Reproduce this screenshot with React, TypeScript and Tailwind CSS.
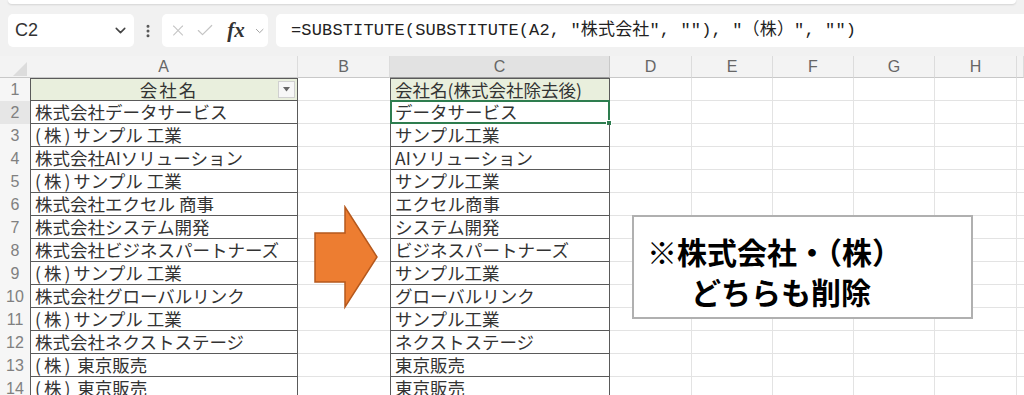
import { Check, ChevronDown, EllipsisVertical, X } from "lucide-react";

const colA = [
  "会社名",
  "株式会社データサービス",
  "(株)サンプル 工業",
  "株式会社AIソリューション",
  "(株)サンプル 工業",
  "株式会社エクセル 商事",
  "株式会社システム開発",
  "株式会社ビジネスパートナーズ",
  "(株)サンプル 工業",
  "株式会社グローバルリンク",
  "(株)サンプル 工業",
  "株式会社ネクストステージ",
  "(株) 東京販売",
  "(株) 東京販売",
];

const colC = [
  "会社名(株式会社除去後)",
  "データサービス",
  "サンプル工業",
  "AIソリューション",
  "サンプル工業",
  "エクセル商事",
  "システム開発",
  "ビジネスパートナーズ",
  "サンプル工業",
  "グローバルリンク",
  "サンプル工業",
  "ネクストステージ",
  "東京販売",
  "東京販売",
];

const letters = ["A", "B", "C", "D", "E", "F", "G", "H", ""];

// widen the "(株)" prefix a little, the sheet font draws it looser
function CellText({ text }: { text: string }) {
  if (text.startsWith("(株)")) {
    return (
      <>
        <span className="tracking-[3px]">(株)</span>
        {text.slice(3)}
      </>
    );
  }
  return <>{text}</>;
}

function FormulaBar() {
  return (
    <div className="flex items-center h-[33px] pl-2 gap-0">
      {/* name box */}
      <div className="w-[126px] h-full bg-white rounded-[5px] flex items-center justify-between pl-[7px] pr-[5px]">
        <span className="text-[18px] text-[#333] font-['Liberation_Sans',sans-serif]">C2</span>
        <ChevronDown className="w-[17px] h-[17px] text-[#444]" strokeWidth={2.2} />
      </div>
      <div className="w-[28px] flex justify-center">
        <EllipsisVertical className="w-[16px] h-[16px] text-[#555]" strokeWidth={2.5} />
      </div>
      {/* function buttons */}
      <div className="w-[106px] h-full bg-white rounded-[5px] flex items-center pl-[7px] pr-[2px] gap-[8px]">
        <X className="w-[19px] h-[19px] text-[#c4c4c4]" strokeWidth={1.4} />
        <Check className="w-[21px] h-[21px] text-[#c4c4c4]" strokeWidth={1.4} />
        <span className="ml-[4px] text-[21px] italic font-bold text-[#333] font-['Liberation_Serif',serif] leading-none">
          fx
        </span>
        <ChevronDown className="w-[14px] h-[14px] text-[#999]" strokeWidth={1.6} />
      </div>
      {/* formula */}
      <div className="ml-2 flex-1 h-full bg-white rounded-l-[5px] flex items-center pl-[15px]">
        <span className="text-[17px] text-[#222] whitespace-pre tracking-[0.15px] font-['Liberation_Mono','Noto_Sans_CJK_JP',monospace]">
          =SUBSTITUTE(SUBSTITUTE(A2, "株式会社", ""), "（株）", "")
        </span>
      </div>
    </div>
  );
}

function Sheet() {
  const cellText = "text-[17.5px] text-[#333] leading-[20px] whitespace-nowrap font-['Noto_Sans_CJK_JP',sans-serif]";
  return (
    <div className="grid grid-cols-[30px_268px_92px_220px_82px_81px_81px_81px_82px_1fr] grid-rows-[22px_repeat(14,23px)] bg-white">
      {/* header row */}
      <div className="relative bg-[#f3f3f3] border-b border-[#c8c8c8]">
        <svg className="absolute left-[13px] top-[6px]" width="14" height="14" viewBox="0 0 14 14">
          <polygon points="14,0 14,14 0,14" fill="#dcdcdc" />
        </svg>
      </div>
      {letters.map((l, i) => (
        <div
          key={l + i}
          className={`flex items-center justify-center border-r border-b text-[16px] text-[#666] font-['Liberation_Sans',sans-serif] ${
            l === "C" ? "bg-[#e2e2e2] border-r-[#c8c8c8] border-b-[#9a9a9a]" : "bg-[#f3f3f3] border-r-[#dcdcdc] border-b-[#c8c8c8]"
          }`}
        >
          {l}
        </div>
      ))}

      {colA.map((a, idx) => {
        const r = idx + 1;
        const head = r === 1;
        return (
          <div key={r} className="contents">
            <div
              className={`flex items-center justify-center text-[16px] text-[#808080] font-['Liberation_Sans',sans-serif] ${
                r === 2 ? "bg-[#e6e6e6]" : "bg-[#f6f6f6]"
              }`}
            >
              {r}
            </div>
            {/* A */}
            <div
              className={`relative flex items-center border-l border-r border-b border-[#5a5a5a] ${
                head ? "bg-[#e9efdd] border-t justify-center" : "pl-[4px]"
              }`}
            >
              <span className={`${cellText} ${head ? "tracking-[2px] pl-[10px]" : ""}`}>
                <CellText text={a} />
              </span>
              {head && (
                <div className="absolute right-[2px] top-[2px] w-[17px] h-[17px] bg-[#f7f7f7] border border-[#d0d0d0] flex items-center justify-center">
                  <svg width="7" height="5" viewBox="0 0 7 5">
                    <polygon points="0,0 7,0 3.5,4.5" fill="#666" />
                  </svg>
                </div>
              )}
            </div>
            {/* B */}
            <div className="border-b border-[#e3e3e3]" />
            {/* C */}
            <div
              className={`relative flex items-center pl-[4px] border-l border-r border-b border-[#5a5a5a] ${
                head ? "bg-[#e9efdd] border-t" : ""
              }`}
            >
              <span className={cellText}>{colC[idx]}</span>
              {r === 2 && (
                <div className="absolute -left-[1px] -top-[1px] -right-[1px] -bottom-[1px] border-2 border-[#2e7d4f]">
                  <div className="absolute -right-[4px] -bottom-[4px] w-[6px] h-[6px] bg-[#2e7d4f] border border-white" />
                </div>
              )}
            </div>
            {/* D..H */}
            {[0, 1, 2, 3, 4].map((k) => (
              <div key={k} className="border-r border-b border-[#e3e3e3]" />
            ))}
            <div className="border-b border-[#e3e3e3]" />
          </div>
        );
      })}
    </div>
  );
}

export default function App() {
  return (
    <div className="relative w-[1024px] h-[395px] overflow-hidden bg-[#f1f1f1]">
      <div className="h-[4px] mx-[8px] bg-white rounded-b-[6px] shadow-[0_1px_2px_rgba(0,0,0,0.12)]" />
      <div className="mt-[10px]">
        <FormulaBar />
      </div>
      <div className="mt-[9px]">
        <Sheet />
      </div>

      {/* orange arrow shape */}
      <svg className="absolute left-[313px] top-[205px]" width="68" height="106" viewBox="0 0 68 106">
        <polygon
          points="2,28 32,28 32,2 64,52 32,102 32,77 2,77"
          fill="#ED7D31"
          stroke="#b5581c"
          strokeWidth="1.5"
          strokeLinejoin="miter"
        />
      </svg>

      {/* note box */}
      <div className="absolute left-[632px] top-[215px] w-[341px] h-[104px] bg-white border-2 border-[#b0b0b0] pt-[14px] pl-[13px] font-['Noto_Sans_CJK_JP',sans-serif] font-bold text-black text-[30px] leading-[40px]">
        <div className="whitespace-nowrap">※株式会社・（株）</div>
        <div className="pl-[44px] whitespace-nowrap">どちらも削除</div>
      </div>
    </div>
  );
}
